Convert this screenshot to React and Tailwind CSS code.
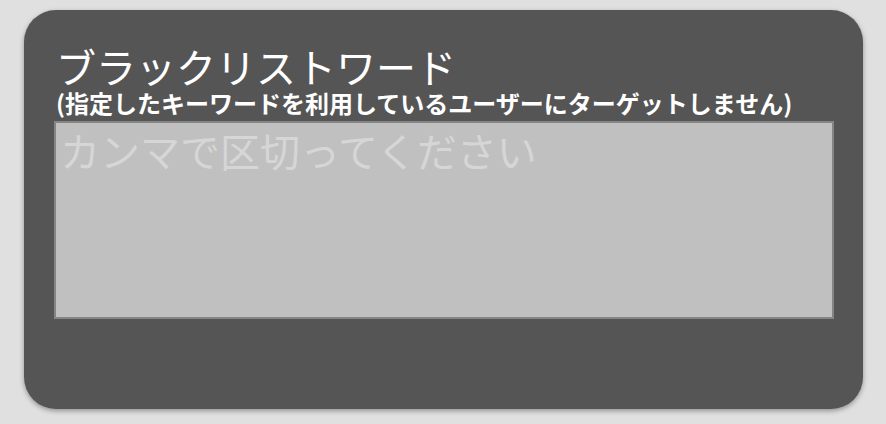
import React from 'react';

const jp = { fontFamily: '"Noto Sans CJK JP", "Noto Sans", sans-serif' };

export default function App() {
  return (
    <div className="w-[886px] h-[424px] bg-[#e0e0e0] pt-[10px] pl-[24px]" style={jp}>
      <div className="w-[839px] h-[399px] rounded-[32px] bg-[#555555] shadow-[0_2px_5px_rgba(0,0,0,0.35)] pt-[33px] pl-[30px]">
        <h1 className="text-[40px] leading-[46px] text-white ml-[2px]">ブラックリストワード</h1>
        <p className="mt-[2px] text-[24px] leading-none font-bold text-white ml-[2px]">
          (指定したキーワードを利用しているユーザーにターゲットしません)
        </p>
        <textarea
          placeholder="カンマで区切ってください"
          className="mt-[6px] block w-[780px] h-[198px] resize-none bg-[#c0c0c0] border-2 border-[#858585] px-[4px] py-[2px] text-[40px] leading-tight text-[#333] placeholder:text-[#d6d6d6] outline-none"
        />
      </div>
    </div>
  );
}
